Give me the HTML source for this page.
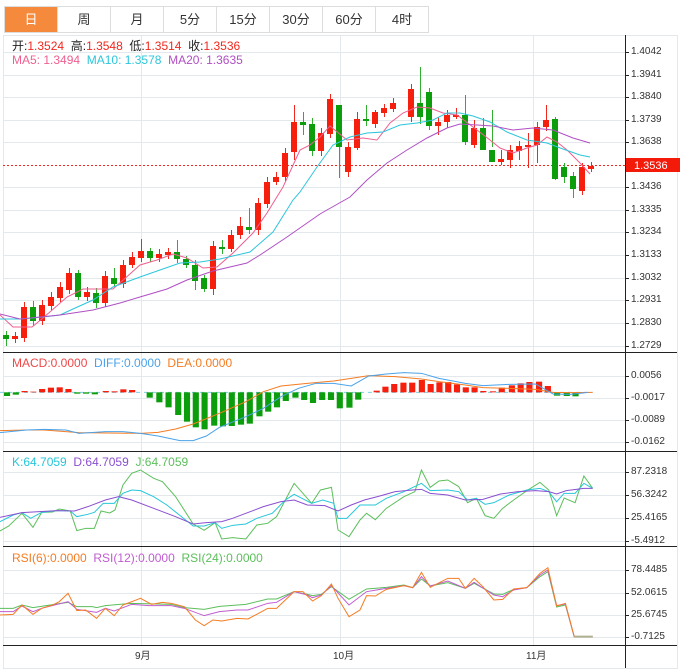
<!DOCTYPE html>
<html><head><meta charset="utf-8"><style>
body{margin:0;width:686px;height:671px;background:#fff;font-family:"Liberation Sans","Noto Sans CJK SC",sans-serif;overflow:hidden;position:relative}
.tabs{position:absolute;left:4px;top:6px;display:flex;border:1px solid #ddd;border-right:none}
.tabs div{width:52px;height:25px;line-height:25px;text-align:center;font-size:13px;color:#333;border-right:1px solid #ddd}
.tabs .on{background:#f5893c;color:#fff}
.lg{position:absolute;font-size:12px;white-space:nowrap}
.r{color:#f0281e}
.ax{position:absolute;left:631px;font-size:10px;color:#333}
</style></head><body>
<div class="tabs"><div class="on">日</div><div>周</div><div>月</div><div>5分</div><div>15分</div><div>30分</div><div>60分</div><div>4时</div></div>

<svg width="686" height="671" style="position:absolute;left:0;top:0">
<g fill="none" stroke="#e3e8ec" stroke-width="1">
<path d="M3.5 35V668.5H677.5V35"/>
<path d="M141.5 35V645M340.5 35V645M533.5 35V645"/>
<path d="M3 52.5H625M3 75.5H625M3 97.5H625M3 120.5H625M3 142.5H625M3 187.5H625M3 210.5H625M3 232.5H625M3 255.5H625M3 278.5H625M3 300.5H625M3 323.5H625M3 346.5H625"/>
<path d="M3 376.5H625M3 398.5H625M3 420.5H625M3 442.5H625"/>
<path d="M3 472.5H625M3 495.5H625M3 518.5H625M3 541.5H625"/>
<path d="M3 570.5H625M3 593.5H625M3 615.5H625M3 637.5H625"/>
<path d="M3 35.5H677"/>
</g>
<g stroke="#222" stroke-width="1">
<path d="M625.5 35V668M3 352.5H677M3 451.5H677M3 546.5H677M3 645.5H677"/>
<path d="M625 52.5h4M625 75.5h4M625 97.5h4M625 120.5h4M625 142.5h4M625 187.5h4M625 210.5h4M625 232.5h4M625 255.5h4M625 278.5h4M625 300.5h4M625 323.5h4M625 346.5h4M625 376.5h4M625 398.5h4M625 420.5h4M625 442.5h4M625 472.5h4M625 495.5h4M625 518.5h4M625 541.5h4M625 570.5h4M625 593.5h4M625 615.5h4M625 637.5h4"/>
</g>
<path d="M3 165.5H625" stroke="#f0281e" stroke-dasharray="2,2" stroke-width="1"/>
<rect x="626" y="158" width="54" height="14" fill="#f41a0a"/>
<text x="634" y="169" font-size="11" fill="#fff" font-family="Liberation Sans">1.3536</text>

<g stroke="#f0281e" stroke-width="1">
<path d="M15.5 332V343M24.5 302V342M42.5 300V325M51.5 292V310M60.5 282V302M69.5 268V294M87.5 287V301M105.5 271V307M123.5 260V288M132.5 252V268M141.5 239V262M159.5 249V262M168.5 248V259M213.5 241V295M231.5 230V252M240.5 217V239M258.5 198V235M267.5 177V208M276.5 172V185M285.5 148V181M294.5 105V160M321.5 128V156M330.5 94V138M348.5 142V177M357.5 112V150M375.5 110V128M384.5 104V117M393.5 98V112M411.5 84V122M438.5 117V135M447.5 110V128M456.5 108V119M474.5 120V148M501.5 150V165M510.5 145V168M519.5 141V160M528.5 133V168M537.5 122V163M546.5 105V131M582.5 163V195M591.5 162V172"/>
</g>
<g fill="#f61f0e">
<rect x="12" y="336" width="6" height="3"/><rect x="21" y="307" width="6" height="31"/><rect x="39" y="305" width="6" height="16"/><rect x="48" y="297" width="6" height="9"/><rect x="57" y="287" width="6" height="11"/><rect x="66" y="273" width="6" height="17"/><rect x="84" y="292" width="6" height="5"/><rect x="102" y="276" width="6" height="27"/><rect x="120" y="265" width="6" height="19"/><rect x="129" y="257" width="6" height="8"/><rect x="138" y="251" width="6" height="7"/><rect x="156" y="254" width="6" height="4"/><rect x="165" y="252" width="6" height="3"/><rect x="210" y="246" width="6" height="43"/><rect x="228" y="235" width="6" height="14"/><rect x="237" y="226" width="6" height="9"/><rect x="255" y="203" width="6" height="27"/><rect x="264" y="182" width="6" height="22"/><rect x="273" y="177" width="6" height="5"/><rect x="282" y="153" width="6" height="24"/><rect x="291" y="122" width="6" height="30"/><rect x="318" y="133" width="6" height="18"/><rect x="327" y="99" width="6" height="35"/><rect x="345" y="147" width="6" height="25"/><rect x="354" y="119" width="6" height="29"/><rect x="372" y="112" width="6" height="12"/><rect x="381" y="108" width="6" height="5"/><rect x="390" y="103" width="6" height="6"/><rect x="408" y="89" width="6" height="28"/><rect x="435" y="122" width="6" height="4"/><rect x="444" y="115" width="6" height="7"/><rect x="453" y="115" width="6" height="2"/><rect x="471" y="128" width="6" height="17"/><rect x="498" y="159" width="6" height="3"/><rect x="507" y="150" width="6" height="10"/><rect x="516" y="146" width="6" height="5"/><rect x="525" y="145" width="6" height="2"/><rect x="534" y="127" width="6" height="18"/><rect x="543" y="120" width="6" height="7"/><rect x="579" y="167" width="6" height="24"/><rect x="588" y="166" width="6" height="3"/>
</g>
<g stroke="#2fae2f" stroke-width="1">
<path d="M6.5 331V346M33.5 301V326M78.5 270V300M96.5 288V308M114.5 268V287M150.5 248V262M177.5 240V263M186.5 256V268M195.5 260V290M204.5 275V292M222.5 240V254M249.5 208V234M303.5 112V135M312.5 118V156M339.5 110V178M366.5 105V126M420.5 67V124M429.5 88V130M465.5 95V145M492.5 110V147M483.5 118V150M555.5 117V180M564.5 163V183M573.5 172V198"/>
</g>
<g fill="#0b9d0b">
<rect x="3" y="335" width="6" height="4"/><rect x="30" y="307" width="6" height="14"/><rect x="75" y="273" width="6" height="24"/><rect x="93" y="293" width="6" height="10"/><rect x="111" y="278" width="6" height="6"/><rect x="147" y="251" width="6" height="7"/><rect x="174" y="252" width="6" height="7"/><rect x="183" y="259" width="6" height="6"/><rect x="192" y="265" width="6" height="16"/><rect x="201" y="278" width="6" height="11"/><rect x="219" y="247" width="6" height="2"/><rect x="246" y="227" width="6" height="3"/><rect x="300" y="122" width="6" height="3"/><rect x="309" y="124" width="6" height="27"/><rect x="336" y="105" width="6" height="42"/><rect x="363" y="119" width="6" height="2"/><rect x="417" y="103" width="6" height="14"/><rect x="426" y="92" width="6" height="34"/><rect x="462" y="115" width="6" height="27"/><rect x="480" y="128" width="6" height="22"/><rect x="489" y="150" width="6" height="12"/><rect x="552" y="119" width="6" height="60"/><rect x="561" y="167" width="6" height="10"/><rect x="570" y="176" width="6" height="13"/>
</g>
<g fill="none" stroke-width="1">
<polyline stroke="#ef5f8f" points="0,315 13,327 32,327 43,318 67,297 83,289 113,289 140,265 157,260 173,254 187,258 203,268 217,267 233,253 253,233 267,213 283,187 300,150 310,145 320,137 330,126 347,140 363,138 377,140 390,123 403,113 417,107 430,108 443,113 457,115 477,130 490,140 500,148 513,153 527,148 537,145 547,137 557,142 567,150 580,163 590,174"/>
<polyline stroke="#2cc6dc" points="0,319 20,319 43,317 60,315 73,309 93,300 113,287 140,277 160,270 180,263 200,262 220,259 250,252 273,232 293,200 300,192 317,167 333,145 350,137 367,133 383,132 400,125 417,123 433,120 447,113 460,113 473,116 490,122 507,132 527,140 547,143 563,149 580,155 590,157"/>
<polyline stroke="#b04fc4" points="0,314 20,319 60,315 93,310 120,303 140,297 167,289 187,280 213,271 247,263 260,255 287,237 320,214 327,210 350,197 367,180 387,163 407,150 427,138 447,128 460,124 477,125 493,126 513,130 533,128 553,130 573,138 590,143"/>
</g>

<g transform="translate(0,350) scale(0.439,0.3333)">
<path d="M0 127H1350" stroke="#7fcfe8" stroke-dasharray="4,4" stroke-width="1" vector-effect="non-scaling-stroke"/>
<g fill="#0b9d0b">
<rect x="9" y="127" width="14" height="11"/><rect x="29" y="127" width="14" height="7"/><rect x="169" y="127" width="14" height="4"/><rect x="189" y="127" width="14" height="4"/><rect x="209" y="127" width="14" height="6"/><rect x="334" y="127" width="14" height="16"/><rect x="356" y="127" width="14" height="30"/><rect x="377" y="127" width="14" height="45"/><rect x="399" y="127" width="14" height="68"/><rect x="419" y="127" width="14" height="88"/><rect x="439" y="127" width="14" height="105"/><rect x="459" y="127" width="14" height="111"/><rect x="481" y="127" width="14" height="100"/><rect x="501" y="127" width="14" height="102"/><rect x="521" y="127" width="14" height="101"/><rect x="542" y="127" width="14" height="97"/><rect x="562" y="127" width="14" height="94"/><rect x="584" y="127" width="14" height="72"/><rect x="604" y="127" width="14" height="58"/><rect x="624" y="127" width="14" height="45"/><rect x="644" y="127" width="14" height="26"/><rect x="666" y="127" width="14" height="16"/><rect x="686" y="127" width="14" height="23"/><rect x="706" y="127" width="14" height="32"/><rect x="727" y="127" width="14" height="23"/><rect x="747" y="127" width="14" height="23"/><rect x="767" y="127" width="14" height="48"/><rect x="789" y="127" width="14" height="46"/><rect x="809" y="127" width="14" height="22"/><rect x="1262" y="127" width="14" height="10"/><rect x="1284" y="127" width="14" height="11"/><rect x="1304" y="127" width="14" height="12"/>
</g>
<g fill="#f61f0e">
<rect x="49" y="123" width="14" height="4"/><rect x="69" y="125" width="14" height="2"/><rect x="89" y="117" width="14" height="10"/><rect x="109" y="113" width="14" height="14"/><rect x="129" y="112" width="14" height="15"/><rect x="149" y="117" width="14" height="10"/><rect x="234" y="123" width="14" height="4"/><rect x="254" y="124" width="14" height="3"/><rect x="274" y="118" width="14" height="9"/><rect x="294" y="120" width="14" height="7"/><rect x="851" y="122" width="14" height="5"/><rect x="871" y="110" width="14" height="17"/><rect x="891" y="102" width="14" height="25"/><rect x="912" y="98" width="14" height="29"/><rect x="932" y="98" width="14" height="29"/><rect x="954" y="90" width="14" height="37"/><rect x="974" y="102" width="14" height="25"/><rect x="994" y="97" width="14" height="30"/><rect x="1014" y="96" width="14" height="31"/><rect x="1034" y="103" width="14" height="24"/><rect x="1054" y="112" width="14" height="15"/><rect x="1074" y="112" width="14" height="15"/><rect x="1094" y="123" width="14" height="4"/><rect x="1116" y="124" width="14" height="3"/><rect x="1136" y="113" width="14" height="14"/><rect x="1159" y="106" width="14" height="21"/><rect x="1179" y="100" width="14" height="27"/><rect x="1199" y="96" width="14" height="31"/><rect x="1221" y="95" width="14" height="32"/><rect x="1241" y="108" width="14" height="19"/>
</g>
<g fill="none" stroke-width="1">
<polyline vector-effect="non-scaling-stroke" stroke="#f57c22" points="0,242 60,240 100,240 180,248 320,250 360,247 400,237 440,222 500,190 560,155 600,125 640,108 700,100 760,93 800,85 840,77 900,80 960,87 1000,95 1060,105 1100,113 1160,115 1220,118 1260,127 1300,128 1350,127"/>
<polyline vector-effect="non-scaling-stroke" stroke="#4aa3ea" points="0,248 60,240 100,238 150,240 180,250 240,245 280,245 320,250 360,258 410,272 440,272 470,258 500,232 560,200 600,175 640,140 680,115 720,100 760,100 800,108 840,78 880,72 920,68 960,70 1000,85 1060,100 1100,107 1160,103 1220,102 1260,132 1300,133 1340,127"/>
</g>
</g>

<g transform="translate(0,450) scale(0.439,0.3333)" fill="none">
<polyline vector-effect="non-scaling-stroke" stroke="#5cbf5c" points="0,243 20,228 50,190 75,232 95,187 120,186 135,177 160,183 175,242 195,235 215,235 230,183 250,189 262,180 280,105 300,70 320,60 350,85 370,95 400,140 440,222 465,241 490,218 505,267 530,263 560,267 585,225 610,220 630,200 670,100 710,160 730,120 755,112 770,240 795,260 820,210 835,190 855,209 880,175 920,140 945,125 960,60 980,112 1000,93 1020,90 1045,110 1065,158 1085,145 1105,197 1125,205 1145,175 1170,150 1200,122 1230,97 1250,120 1268,197 1285,144 1310,158 1330,78 1350,115"/>
<polyline vector-effect="non-scaling-stroke" stroke="#26c6da" points="0,215 30,195 50,188 70,205 95,187 130,182 160,183 175,200 200,193 215,187 235,160 260,160 280,130 300,120 320,122 350,140 380,165 420,207 440,228 465,228 490,218 505,235 530,226 560,222 585,205 620,190 650,150 670,133 710,160 735,150 760,160 770,205 790,205 820,165 855,165 880,145 920,125 960,100 980,122 1020,120 1045,125 1065,150 1085,145 1105,163 1125,158 1160,135 1200,120 1230,115 1250,125 1268,155 1285,130 1310,130 1330,100 1350,115"/>
<polyline vector-effect="non-scaling-stroke" stroke="#8a4fd0" points="0,202 50,188 90,185 130,182 170,183 200,170 240,150 270,140 300,150 350,175 400,200 440,222 470,218 505,215 530,205 560,190 600,170 640,155 670,150 700,165 740,167 770,183 800,165 830,150 860,140 900,125 940,120 960,118 980,130 1020,135 1060,150 1100,148 1140,132 1180,125 1220,122 1250,125 1268,132 1290,122 1330,115 1350,115"/>
</g>

<g transform="translate(0,545) scale(0.439,0.3333)" fill="none">
<polyline vector-effect="non-scaling-stroke" stroke="#5cbf5c" points="0,190 30,190 50,180 75,188 155,172 175,185 210,185 220,188 240,182 300,175 390,178 420,188 465,193 500,184 560,178 610,162 630,162 670,140 700,148 712,152 732,148 755,125 795,163 835,132 880,127 920,120 940,128 960,102 980,123 1020,113 1060,130 1080,115 1125,147 1145,148 1170,133 1200,128 1230,95 1248,80 1268,186 1288,180 1308,275 1350,275"/>
<polyline vector-effect="non-scaling-stroke" stroke="#c05cd0" points="0,200 30,200 50,183 75,200 95,190 155,170 175,193 220,202 240,190 260,198 300,178 340,182 390,182 420,190 465,212 500,200 540,195 565,195 610,175 630,172 670,140 700,150 712,158 732,150 755,122 795,180 835,140 880,130 920,122 940,128 960,95 980,123 1020,108 1060,130 1080,112 1125,150 1145,155 1170,135 1200,128 1230,90 1248,75 1268,182 1288,177 1308,275 1350,275"/>
<polyline vector-effect="non-scaling-stroke" stroke="#f57c22" points="0,210 30,208 50,180 75,208 95,190 120,180 135,170 155,145 175,197 195,195 220,220 240,190 260,212 280,180 300,170 320,160 345,178 370,172 390,175 420,185 445,225 465,242 485,225 505,228 540,220 565,222 610,190 630,190 670,140 690,140 712,168 732,152 755,117 770,160 795,215 820,195 835,152 855,153 880,133 920,122 940,128 960,82 980,127 1020,100 1045,100 1060,130 1080,100 1100,125 1125,165 1145,163 1170,132 1200,128 1230,85 1248,68 1268,183 1288,175 1308,275 1350,275"/>
<path vector-effect="non-scaling-stroke" d="M1308 275H1350" stroke="#b0b090" stroke-width="2"/>
</g>
<g font-size="10" fill="#333" font-family="Liberation Sans,Noto Sans CJK SC,sans-serif">
<text x="135" y="659">9月</text><text x="333" y="659">10月</text><text x="526" y="659">11月</text>
</g>
</svg>

<div class="lg" style="left:12px;top:37px;color:#222">开:<span class="r">1.3524</span>&nbsp; 高:<span class="r">1.3548</span>&nbsp; 低:<span class="r">1.3514</span>&nbsp; 收:<span class="r">1.3536</span></div>
<div class="lg" style="left:12px;top:53px"><span style="color:#ef5f8f">MA5: 1.3494</span>&nbsp; <span style="color:#2cc6dc">MA10: 1.3578</span>&nbsp; <span style="color:#b04fc4">MA20: 1.3635</span></div>
<div class="lg" style="left:12px;top:356px"><span style="color:#f04848">MACD:0.0000</span>&nbsp; <span style="color:#4aa3ea">DIFF:0.0000</span>&nbsp; <span style="color:#f57c22">DEA:0.0000</span></div>
<div class="lg" style="left:12px;top:455px"><span style="color:#26c6da">K:64.7059</span>&nbsp; <span style="color:#8a4fd0">D:64.7059</span>&nbsp; <span style="color:#5cbf5c">J:64.7059</span></div>
<div class="lg" style="left:12px;top:551px"><span style="color:#f57c22">RSI(6):0.0000</span>&nbsp; <span style="color:#c05cd0">RSI(12):0.0000</span>&nbsp; <span style="color:#5cbf5c">RSI(24):0.0000</span></div>

<div class="ax" style="top:46px">1.4042</div><div class="ax" style="top:69px">1.3941</div><div class="ax" style="top:91px">1.3840</div><div class="ax" style="top:114px">1.3739</div><div class="ax" style="top:136px">1.3638</div><div class="ax" style="top:181px">1.3436</div><div class="ax" style="top:204px">1.3335</div><div class="ax" style="top:226px">1.3234</div><div class="ax" style="top:249px">1.3133</div><div class="ax" style="top:272px">1.3032</div><div class="ax" style="top:294px">1.2931</div><div class="ax" style="top:317px">1.2830</div><div class="ax" style="top:340px">1.2729</div>
<div class="ax" style="top:370px">0.0056</div><div class="ax" style="top:392px">-0.0017</div><div class="ax" style="top:414px">-0.0089</div><div class="ax" style="top:436px">-0.0162</div>
<div class="ax" style="top:466px">87.2318</div><div class="ax" style="top:489px">56.3242</div><div class="ax" style="top:512px">25.4165</div><div class="ax" style="top:535px">-5.4912</div>
<div class="ax" style="top:564px">78.4485</div><div class="ax" style="top:587px">52.0615</div><div class="ax" style="top:609px">25.6745</div><div class="ax" style="top:631px">-0.7125</div>
</body></html>
